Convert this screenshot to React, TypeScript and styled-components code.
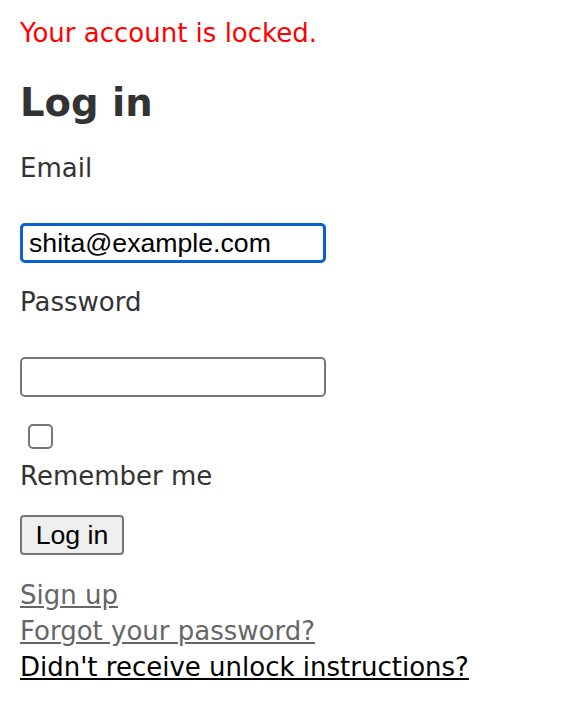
import React from 'react';
import styled, { createGlobalStyle } from 'styled-components';

const GlobalStyle = createGlobalStyle`
  body {
    margin: 0;
    background: #fff;
    font-family: 'DejaVu Sans', Verdana, sans-serif;
  }
`;

const Page = styled.div`
  padding: 15px 20px 20px;
  color: #333;
  font-size: 26px;
  line-height: 36px;
`;

const Alert = styled.p`
  margin: 0;
  color: #ff0000;
`;

const Title = styled.h1`
  margin: 28px 0 23px;
  font-size: 38.5px;
  line-height: 48px;
  font-weight: bold;
  color: #333;
`;

const Form = styled.form`
  display: flex;
  flex-direction: column;
  align-items: flex-start;
`;

const Field = styled.div<{ $gap?: number }>`
  display: flex;
  flex-direction: column;
  align-items: flex-start;
  margin-top: ${({ $gap }) => $gap ?? 0}px;
`;

const Label = styled.label`
  display: block;
  line-height: 36px;
`;

const TextInput = styled.input<{ $focused?: boolean }>`
  box-sizing: border-box;
  width: 306px;
  height: 40px;
  margin-top: 37px;
  padding: 0 6px;
  font-family: 'Liberation Sans', Arial, sans-serif;
  font-size: 26.67px;
  color: #000;
  background: #fff;
  border: ${({ $focused }) => ($focused ? '3px solid #0b5fd4' : '2px solid #767676')};
  border-radius: 5px;
  outline: none;
`;

const Check = styled.input`
  appearance: none;
  box-sizing: border-box;
  width: 25px;
  height: 25px;
  margin: 27px 0 0 8px;
  border: 2px solid #767676;
  border-radius: 5px;
  background: #fff;
`;

const CheckLabel = styled.label`
  display: block;
  margin-top: 9px;
  line-height: 36px;
`;

const Submit = styled.button`
  box-sizing: border-box;
  margin-top: 21px;
  height: 40px;
  width: 104px;
  padding: 0;
  font-family: 'Liberation Sans', Arial, sans-serif;
  font-size: 26.67px;
  color: #000;
  background: #efefef;
  border: 2px solid #767676;
  border-radius: 4px;
`;

const Links = styled.div`
  display: flex;
  flex-direction: column;
  align-items: flex-start;
  margin-top: 22px;
`;

const LinkItem = styled.a<{ $dark?: boolean }>`
  color: ${({ $dark }) => ($dark ? '#000' : '#666')};
  text-decoration: underline;
  line-height: 36px;
`;

const App = () => {
  return (
    <>
      <GlobalStyle />
      <Page>
        <Alert>Your account is locked.</Alert>
        <Title>Log in</Title>
        <Form onSubmit={(e) => e.preventDefault()}>
          <Field>
            <Label htmlFor="user_email">Email</Label>
            <TextInput
              id="user_email"
              type="email"
              $focused
              defaultValue="shita@example.com"
            />
          </Field>
          <Field $gap={21}>
            <Label htmlFor="user_password">Password</Label>
            <TextInput id="user_password" type="password" />
          </Field>
          <Check id="user_remember_me" type="checkbox" />
          <CheckLabel htmlFor="user_remember_me">Remember me</CheckLabel>
          <Submit type="submit">Log in</Submit>
        </Form>
        <Links>
          <LinkItem href="#">Sign up</LinkItem>
          <LinkItem href="#">Forgot your password?</LinkItem>
          <LinkItem href="#" $dark>
            Didn't receive unlock instructions?
          </LinkItem>
        </Links>
      </Page>
    </>
  );
};

export default App;
